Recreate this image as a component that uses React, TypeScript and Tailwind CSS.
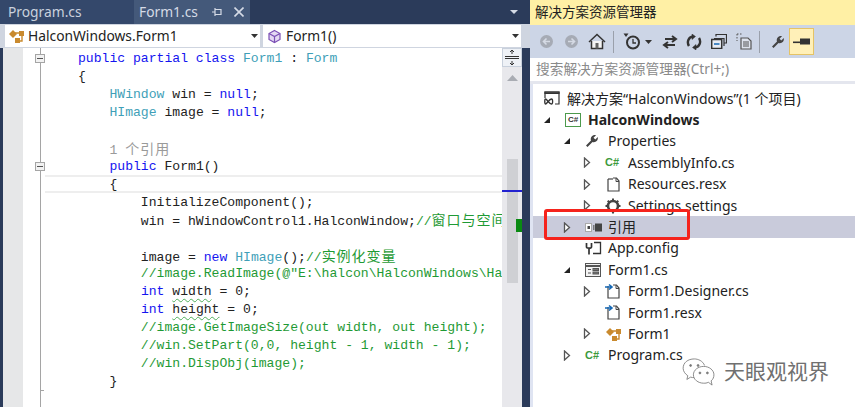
import React from 'react';

const UI_FONT = "font-['Noto_Sans','Noto_Sans_CJK_SC',sans-serif]";

const Kw = ({ children }: { children: React.ReactNode }) => <span className="text-[#1414f0]">{children}</span>;
const Ty = ({ children }: { children: React.ReactNode }) => <span className="text-[#3f9fb8]">{children}</span>;
const Cm = ({ children }: { children: React.ReactNode }) => <span className="text-[#1f9a35]">{children}</span>;
const Cjk = ({ children }: { children: React.ReactNode }) => (
  <span className="font-['Noto_Sans_CJK_SC',sans-serif] text-[14px] tracking-[1px]">{children}</span>
);
const Squiggle = ({ children }: { children: React.ReactNode }) => (
  <span className="underline decoration-wavy decoration-[#4fae5a] decoration-1 underline-offset-[3px]">{children}</span>
);

const ClassIcon = () => (
  <svg width="18" height="16" viewBox="0 0 18 16" fill="#c98a2e">
    <path d="M1 6 L5 2 L9 6 L5 10 Z" />
    <path d="M5 5 H14 V13 H9" fill="none" stroke="#c98a2e" strokeWidth="1.4" />
    <rect x="11" y="3" width="5" height="5" />
    <rect x="7" y="10" width="5" height="5" />
  </svg>
);

const CubeIcon = () => (
  <svg width="15" height="15" viewBox="0 0 15 15" fill="none" stroke="#7b4fb5" strokeWidth="1.2">
    <path d="M7.5 1.5 L13 4.5 V10.5 L7.5 13.5 L2 10.5 V4.5 Z" fill="#e4d8f3" />
    <path d="M2 4.5 L7.5 7.5 L13 4.5 M7.5 7.5 V13.5" />
  </svg>
);

const Tri = ({ open }: { open?: boolean }) =>
  open ? (
    <svg width="8" height="8" viewBox="0 0 8 8"><path d="M7 1 V7 H1 Z" fill="#222" /></svg>
  ) : (
    <svg width="8" height="11" viewBox="0 0 8 11"><path d="M1.5 1 L6.5 5.5 L1.5 10 Z" fill="#fff" stroke="#555" strokeWidth="1.3" /></svg>
  );

const CSharp = () => <span className="text-[11px] font-bold leading-none text-[#3c9a3c] font-['Liberation_Sans',sans-serif]">C#</span>;

const DocIcon = ({ arrow }: { arrow?: boolean }) => (
  <svg width="16" height="17" viewBox="0 0 16 17" fill="none">
    <path d="M3 3 V15 H14 V5 L11.5 2 H8" stroke="#444" strokeWidth="1.2" fill="#fff" />
    <path d="M11 2 V5.5 H14" stroke="#444" strokeWidth="1" />
    {arrow ? <path d="M0 4 H6 M4 1.5 L7 4 L4 6.5" stroke="#1668b5" strokeWidth="1.6" /> : <path d="M3 3 H8" stroke="#444" strokeWidth="1.2" />}
  </svg>
);

const GearIcon = () => (
  <svg width="16" height="16" viewBox="0 0 16 16">
    <circle cx="8" cy="8" r="5" fill="none" stroke="#444" strokeWidth="2.6" />
    <path d="M8 0.5 V15.5 M0.5 8 H15.5 M2.7 2.7 L13.3 13.3 M13.3 2.7 L2.7 13.3" stroke="#444" strokeWidth="2" strokeDasharray="2.6 9.8" />
  </svg>
);

const WrenchIcon = () => (
  <svg width="14" height="14" viewBox="0 0 14 14">
    <path d="M1 11.5 L6 6.5 C5 3.5 7.5 0.5 11 1.2 L8.5 3.7 L10.3 5.5 L12.8 3 C13.5 6.5 10.5 9 7.5 8 L2.5 13 Z" fill="#444" />
  </svg>
);

const RefIcon = () => (
  <svg width="17" height="9" viewBox="0 0 17 9">
    <rect x="0.5" y="0.5" width="6" height="8" fill="#fff" stroke="#aaa" />
    <rect x="2.5" y="3" width="2.5" height="3" fill="#444" />
    <rect x="8" y="2" width="1.5" height="5" fill="#777" />
    <rect x="10" y="0.5" width="7" height="8" fill="#444" />
  </svg>
);

const ConfigIcon = () => (
  <svg width="17" height="15" viewBox="0 0 17 15" fill="none" stroke="#333" strokeWidth="1.3">
    <path d="M9 1.5 H15.5 V12.5 H8" />
    <path d="M1.5 2 V6 C1.5 7.5 6.5 7.5 6.5 6 V2 M4 7.5 V13.5" strokeWidth="1.7" />
  </svg>
);

const FormIcon = () => (
  <svg width="16" height="14" viewBox="0 0 16 14" fill="none" stroke="#555">
    <rect x="0.5" y="0.5" width="15" height="13" fill="#f3f3f3" />
    <path d="M0.5 3 H15.5" strokeWidth="2" />
    <path d="M3 6.5 H6 M3 10 H6" />
    <rect x="8" y="5.5" width="5.5" height="2" fill="#777" />
    <rect x="8" y="9" width="5.5" height="2" fill="#777" />
  </svg>
);

const SolutionIcon = () => (
  <svg width="16" height="15" viewBox="0 0 16 15" fill="none" stroke="#333" strokeWidth="1.2">
    <path d="M1 4 V1 H15 V13 H11 M1 4 V7" />
    <path d="M1 1 H15 V2.5 H1 Z" fill="#555" />
    <path d="M1.5 8 C3 8 5 13 7.5 13 C9 13 9 8 7.5 8 C5 8 3 13 1.5 13 C0.5 13 0.5 8 1.5 8 Z" strokeWidth="1.3" />
  </svg>
);

const ProjectIcon = () => (
  <span className="flex h-[14px] w-[16px] items-center justify-center border border-[#4c9a4c] bg-white text-[8px] font-bold leading-none text-[#333] font-['Liberation_Sans',sans-serif]">
    C#
  </span>
);

const ToolbarIcons = () => (
  <div className="flex h-[33px] items-center bg-[#ccd5e6] pl-[10px]">
    <svg width="13" height="13" viewBox="0 0 13 13" className="mr-[12px]"><circle cx="6.5" cy="6.5" r="6.5" fill="#a6abb5" /><path d="M10 6.5 H4 M6.5 3.5 L3.5 6.5 L6.5 9.5" fill="none" stroke="#d5dae4" strokeWidth="1.6" /></svg>
    <svg width="13" height="13" viewBox="0 0 13 13" className="mr-[10px]"><circle cx="6.5" cy="6.5" r="6.5" fill="#a6abb5" /><path d="M3 6.5 H9 M6.5 3.5 L9.5 6.5 L6.5 9.5" fill="none" stroke="#d5dae4" strokeWidth="1.6" /></svg>
    <svg width="18" height="17" viewBox="0 0 18 17" fill="none" stroke="#333" strokeWidth="1.5"><path d="M1 9 L9 1.5 L17 9" /><path d="M3.5 8 V15.5 H14.5 V8" fill="#f4f4f4" /><rect x="7.5" y="10" width="3" height="5.5" fill="#666" stroke="none" /></svg>
    <div className="ml-[7px] mr-[9px] h-[22px] w-px bg-[#9aa0ab]" />
    <svg width="19" height="17" viewBox="0 0 19 17" fill="none"><path d="M0.5 0.5 L5.5 0.5 L3 4 Z" fill="#333" /><circle cx="10" cy="9.5" r="6" stroke="#333" strokeWidth="2" /><path d="M10 6 V10 H13" stroke="#333" strokeWidth="1.3" /></svg>
    <svg width="7" height="4" viewBox="0 0 7 4" className="ml-[3px] mr-[10px]"><path d="M0 0 H7 L3.5 4 Z" fill="#333" /></svg>
    <svg width="16" height="14" viewBox="0 0 16 14" fill="none" stroke="#333" strokeWidth="2" className="mr-[8px]"><path d="M3 4 H13 M10 1 L14 4 L10 7" /><path d="M13 10 H3 M6 7 L2 10 L6 13" /></svg>
    <svg width="16" height="16" viewBox="0 0 16 16" fill="none" stroke="#333" strokeWidth="2.4" className="mr-[9px]"><path d="M3 12 C0.5 8 2.5 3 7 2.5 M13 4 C15.5 8 13.5 13 9 13.5" /><path d="M6 0 L9.5 2.5 L6 5.5 Z M10 16 L6.5 13.5 L10 10.5 Z" fill="#333" strokeWidth="0.5" /></svg>
    <svg width="16" height="15" viewBox="0 0 16 15" fill="none" stroke="#333" strokeWidth="1.2" className="mr-[9px]"><path d="M5 2.5 V0.5 H15.5 V9 H13" /><path d="M3 4.5 H13 V12" /><rect x="0.7" y="5.5" width="10" height="9" fill="#e8edf5" strokeWidth="1.5" /><path d="M3 10 H8.5" stroke="#1668b5" strokeWidth="1.5" /></svg>
    <svg width="16" height="17" viewBox="0 0 16 17" fill="none" stroke="#555" className="mr-[7px]"><path d="M1 1 H7 M1 1 V8" strokeDasharray="1.5 1.5" /><path d="M5 5 H12 L15 8 V16 H5 Z" fill="#dde2ec" strokeWidth="1.2" /><path d="M7 9 H13 M7 11 H13 M7 13 H13" /></svg>
    <div className="mr-[11px] h-[22px] w-px bg-[#9aa0ab]" />
    <WrenchIcon />
    <div className="ml-[4px] flex h-[27px] w-[25px] items-center justify-center border border-[#e5c365] bg-[#fff0b8]">
      <svg width="17" height="8" viewBox="0 0 17 8"><rect x="7" y="0.5" width="10" height="6" fill="#333" /><rect x="0" y="3.5" width="8" height="1.6" fill="#333" /></svg>
    </div>
  </div>
);

type CodeLine = { content?: React.ReactNode; fold?: boolean };

const codeLines: CodeLine[] = [
  { fold: true, content: <><Kw>public partial class</Kw> <Ty>Form1</Ty> : <Ty>Form</Ty></> },
  { content: '{' },
  { content: <>    <Ty>HWindow</Ty> win = <Kw>null</Kw>;</> },
  { content: <>    <Ty>HImage</Ty> image = <Kw>null</Kw>;</> },
  {},
  { content: <span className="text-[#9a9a9a]">    1 <Cjk>个引用</Cjk></span> },
  { fold: true, content: <>    <Kw>public</Kw> Form1()</> },
  { content: '    {' },
  { content: '        InitializeComponent();' },
  { content: <>        win = hWindowControl1.HalconWindow;<Cm>//<Cjk>窗口与空间关联</Cjk></Cm></> },
  {},
  { content: <>        image = <Kw>new</Kw> <Ty>HImage</Ty>();<Cm>//<Cjk>实例化变量</Cjk></Cm></> },
  { content: <Cm>{'        //image.ReadImage(@"E:\\halcon\\HalconWindows\\Halcon.png");'}</Cm> },
  { content: <>        <Kw>int</Kw> <Squiggle>width</Squiggle> = 0;</> },
  { content: <>        <Kw>int</Kw> <Squiggle>height</Squiggle> = 0;</> },
  { content: <Cm>        //image.GetImageSize(out width, out height);</Cm> },
  { content: <Cm>        //win.SetPart(0,0, height - 1, width - 1);</Cm> },
  { content: <Cm>        //win.DispObj(image);</Cm> },
  { content: '    }' },
];

type TreeItem = { indent: string; open?: boolean; leaf?: boolean; icon: React.ReactNode; label: string; bold?: boolean; active?: boolean };

const treeItems: TreeItem[] = [
  { indent: 'pl-[11px]', leaf: true, icon: <SolutionIcon />, label: '解决方案“HalconWindows”(1 个项目)' },
  { indent: 'pl-[10px]', open: true, icon: <ProjectIcon />, label: 'HalconWindows', bold: true },
  { indent: 'pl-[30px]', open: true, icon: <WrenchIcon />, label: 'Properties' },
  { indent: 'pl-[50px]', icon: <CSharp />, label: 'AssemblyInfo.cs' },
  { indent: 'pl-[50px]', icon: <DocIcon />, label: 'Resources.resx' },
  { indent: 'pl-[50px]', icon: <GearIcon />, label: 'Settings.settings' },
  { indent: 'pl-[30px]', icon: <RefIcon />, label: '引用', active: true },
  { indent: 'pl-[30px]', leaf: true, icon: <ConfigIcon />, label: 'App.config' },
  { indent: 'pl-[30px]', open: true, icon: <FormIcon />, label: 'Form1.cs' },
  { indent: 'pl-[50px]', icon: <DocIcon arrow />, label: 'Form1.Designer.cs' },
  { indent: 'pl-[50px]', leaf: true, icon: <DocIcon arrow />, label: 'Form1.resx' },
  { indent: 'pl-[50px]', icon: <ClassIcon />, label: 'Form1' },
  { indent: 'pl-[30px]', icon: <CSharp />, label: 'Program.cs' },
];

const TreeRow = ({ item }: { item: TreeItem }) => (
  <div className={`flex h-[21.4px] items-center ${item.indent} ${item.active ? 'bg-[#c9cbdb]' : ''}`}>
    {item.indent === 'pl-[11px]' ? null : (
      <span className="flex w-[22px] shrink-0 items-center pl-[0px]">{item.leaf ? null : <Tri open={item.open} />}</span>
    )}
    <span className="flex w-[23px] shrink-0 items-center justify-start">{item.icon}</span>
    <span className={`whitespace-nowrap text-[14px] leading-none text-[#222] ${item.bold ? 'font-bold' : ''}`}>{item.label}</span>
  </div>
);

export default function App() {
  return (
    <div className={`flex h-[407px] w-[855px] overflow-hidden bg-[#2b3b5a] ${UI_FONT}`}>
      {/* editor */}
      <div className="flex h-full w-[530px] shrink-0 flex-col">
        <div className="flex h-[24px] items-stretch text-[13.8px] leading-[24px]">
          <div className="w-[134px] bg-[#34486b] pl-[8px] text-[#c9d1de]">Program.cs</div>
          <div className="flex w-[116px] items-center bg-[#44597a] pl-[5px] text-[#d5dbe6]">
            <span>Form1.cs</span>
            <svg width="10" height="10" viewBox="0 0 10 10" className="ml-[14px]" fill="none" stroke="#d5dbe6" strokeWidth="1.2"><path d="M0 5 H3 M3 1 V9 M3 2.5 H9 V7.5 H3" /></svg>
            <svg width="10" height="10" viewBox="0 0 10 10" className="ml-[12px]" fill="none" stroke="#d5dbe6" strokeWidth="1.6"><path d="M0.5 0.5 L9.5 9.5 M9.5 0.5 L0.5 9.5" /></svg>
          </div>
          <div className="flex flex-1 items-center justify-end pr-[12px]">
            <svg width="8" height="4" viewBox="0 0 8 4"><path d="M0 0 H8 L4 4 Z" fill="#d5dbe6" /></svg>
          </div>
        </div>

        <div className="flex h-[24px] items-center gap-[3px] bg-[#cfd5e0] px-[5px] pr-[9px] text-[13.8px] text-[#222]">
          <div className="flex h-[22px] w-[255px] items-center bg-white pl-[3px]">
            <ClassIcon />
            <span className="ml-[2px]">HalconWindows.Form1</span>
            <svg width="7" height="4" viewBox="0 0 7 4" className="ml-auto mr-[2px]"><path d="M0 0 H7 L3.5 4 Z" fill="#333" /></svg>
          </div>
          <div className="flex h-[22px] flex-1 items-center bg-white pl-[4px]">
            <CubeIcon />
            <span className="ml-[4px]">Form1()</span>
            <svg width="7" height="4" viewBox="0 0 7 4" className="ml-auto mr-[2px]"><path d="M0 0 H7 L3.5 4 Z" fill="#333" /></svg>
          </div>
        </div>

        <div className="flex min-h-0 flex-1 pl-[3px] pr-[8px]">
          <div className="w-[20px] shrink-0 bg-[#e6e7e8]" />
          <div className="relative min-w-0 flex-1 overflow-hidden bg-white pt-[2px] font-['Liberation_Mono',monospace] text-[13.1px] leading-[17.95px] text-[#222]">
            <div className="absolute inset-y-0 left-[17px] w-px bg-[#a5a5a5]" />
            <div className="absolute left-[22px] right-0 top-[127px] h-[18px] border-y-2 border-[#eeeeee]" />
            <div className="absolute left-[17px] top-[342px] h-px w-[4px] bg-[#a5a5a5]" />
            {codeLines.map((line, i) => (
              <div key={i} className="relative h-[17.95px] whitespace-pre pl-[55px]">
                {line.fold ? (
                  <span className="absolute left-[12px] top-[4px] flex h-[9px] w-[10px] items-center justify-center border border-[#a5a5a5] bg-[#f2f2f2]">
                    <span className="h-px w-[6px] bg-[#555]" />
                  </span>
                ) : null}
                {line.content}
              </div>
            ))}
          </div>
          <div className="relative w-[20px] shrink-0 bg-[#e8e8ec]">
            <div className="flex h-[19px] flex-col items-center justify-center border border-[#c8d0dc] bg-[#eef1f6]">
              <svg width="14" height="15" viewBox="0 0 14 15" fill="none" stroke="#333"><path d="M0 6.5 H14 M0 8.5 H14" /><path d="M7 0 V4 M7 11 V15" /><path d="M5 2 L7 0 L9 2 M5 13 L7 15 L9 13" /></svg>
            </div>
            <svg width="11" height="6" viewBox="0 0 11 6" className="ml-[5px] mt-[8px]"><path d="M0 6 L5.5 0 L11 6 Z" fill="#a9acb3" /></svg>
            <div className="ml-[5px] mt-[78px] h-[124px] w-[11px] bg-[#cfd0d4]" />
            <div className="absolute left-0 right-0 top-[142px] h-[2px] bg-[#2222d0]" />
            <div className="absolute right-0 top-[171px] h-[13px] w-[6px] bg-[#0a8a12]" />
          </div>
        </div>
      </div>

      {/* solution explorer */}
      <div className="relative flex h-full flex-1 flex-col bg-white">
        <div className="flex h-[25px] items-center bg-[#fff0a5] pl-[5px] text-[13.5px] text-[#222]">解决方案资源管理器</div>
        <ToolbarIcons />
        <div className="flex h-[23px] items-center bg-white pl-[6px] text-[13.7px] text-[#8a8a8a]">搜索解决方案资源管理器(Ctrl+;)</div>
        <div className="h-[3px] bg-[#e4e6ee]" />
        <div className="flex min-h-0 flex-1 border-l-[3px] border-[#dfe4f2] pt-[4px]">
          <div className="min-w-0 flex-1">
            {treeItems.map(item => (
              <TreeRow key={item.label} item={item} />
            ))}
          </div>
        </div>

        {/* red annotation */}
        <div className="absolute left-[14px] top-[209px] h-[31px] w-[146px] rounded-[3px] border-[3px] border-[#f5231c]" />

        {/* watermark */}
        <div className="absolute left-[152px] top-[358px] flex items-center">
          <svg width="34" height="28" viewBox="0 0 36 30" fill="none" stroke="#777" strokeWidth="0.9">
            <path d="M24 8 C22 3 17 1 13 1 C6 1 1 5 1 11 C1 14 3 17 6 19 L5 23 L9 20.5 C10 21 12 21 13 21" fill="#fff" />
            <path d="M34 18 C34 13 29 9 23 9 C17 9 12 13 12 18 C12 23 17 27 23 27 C25 27 26 27 28 26 L32 29 L31 24.5 C33 23 34 20.5 34 18 Z" fill="#fff" />
            <circle cx="9" cy="8" r="1" fill="#777" />
            <circle cx="17" cy="8" r="1" fill="#777" />
            <circle cx="19" cy="16" r="1" fill="#777" />
            <circle cx="27" cy="16" r="1" fill="#777" />
          </svg>
          <span className="ml-[8px] -mt-[3px] whitespace-nowrap font-['Noto_Sans_CJK_SC',sans-serif] text-[21px] leading-none text-[#707070] [text-shadow:0_0_2px_#fff]">天眼观视界</span>
        </div>
      </div>
    </div>
  );
}
